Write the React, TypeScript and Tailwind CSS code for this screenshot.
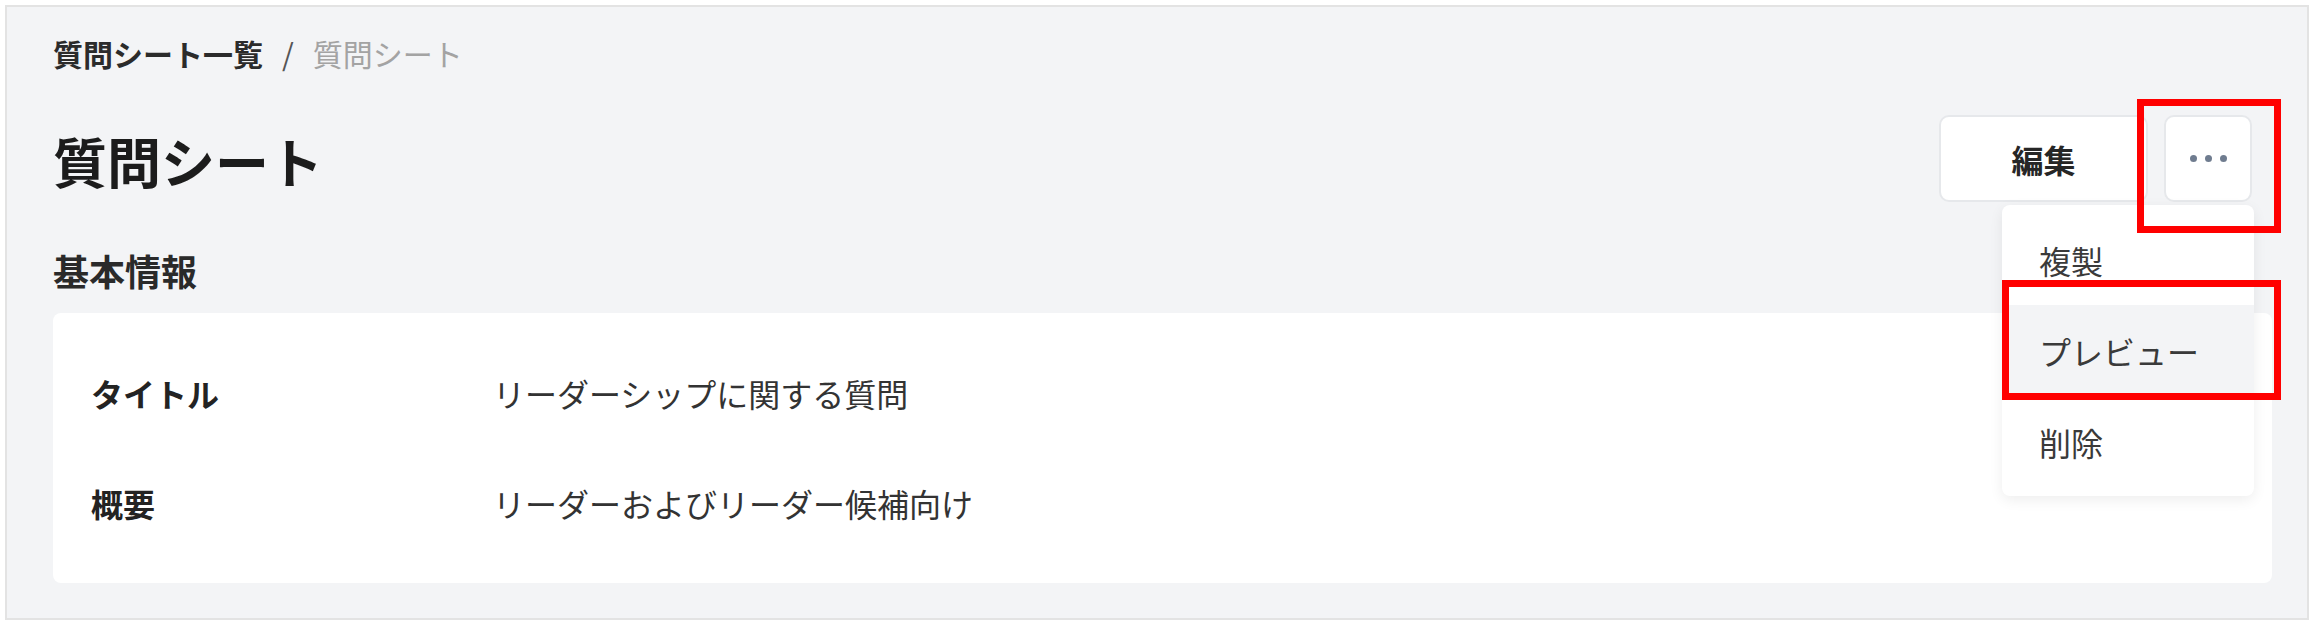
import { useState } from "react";

const menuItems = ["複製", "プレビュー", "削除"];

const rows = [
  { label: "タイトル", value: "リーダーシップに関する質問" },
  { label: "概要", value: "リーダーおよびリーダー候補向け" },
];

const MoreMenu = () => {
  const [hovered] = useState<number>(1);

  return (
    <div className="absolute right-[-2px] top-full mt-[3px] w-[252px] z-10 bg-white rounded-[8px] py-[9px] shadow-[0_4px_14px_rgba(0,0,0,0.07)]">
      {menuItems.map((item, i) => (
        <div
          key={item}
          className={`relative flex items-center h-[91px] pl-[37px] text-[32px] text-[#3a3a3a] ${
            i === hovered ? "bg-[#f3f4f6]" : ""
          }`}
        >
          {item}
          {/* annotation */}
          {i === hovered && (
            <span className="absolute left-0 -top-[25px] w-[279px] h-[120px] border-[7px] border-[#ff0000] z-20 pointer-events-none" />
          )}
        </div>
      ))}
    </div>
  );
};

export default function App() {
  return (
    <div className="bg-white min-h-screen p-[5px] font-['Noto_Sans_CJK_JP','Noto_Sans',sans-serif]">
      <div className="border-2 border-[#e3e3e3] bg-[#f3f4f6] pl-[46px] pr-[35px] pt-[24px] pb-[35px]">
        {/* Breadcrumb */}
        <div className="flex items-center text-[30px] leading-[45px]">
          <span className="font-bold text-[#2b2b2b]">質問シート一覧</span>
          <span className="mx-[19px] text-[#555]">/</span>
          <span className="text-[#a3a3a3]">質問シート</span>
        </div>

        {/* Header */}
        <div className="flex items-center justify-between mt-[39px] mr-[20px] h-[87px]">
          <h1 className="text-[54px] leading-[73px] font-bold text-[#1c1c1c] mt-[3px]">質問シート</h1>
          <div className="flex items-center gap-[16px]">
            <button className="w-[209px] h-[87px] bg-white border-2 border-[#e6e8eb] rounded-[10px] text-[32px] font-bold text-[#262626]">
              編集
            </button>
            <div className="relative">
              <button className="w-[88px] h-[87px] bg-white border-2 border-[#e6e8eb] rounded-[10px] flex items-center justify-center gap-[8px]">
                <span className="w-[7px] h-[7px] rounded-full bg-[#6f7c8f]" />
                <span className="w-[7px] h-[7px] rounded-full bg-[#6f7c8f]" />
                <span className="w-[7px] h-[7px] rounded-full bg-[#6f7c8f]" />
              </button>
              {/* annotation */}
              <span className="absolute -left-[27px] -top-[16px] w-[144px] h-[134px] border-[7px] border-[#ff0000] z-20 pointer-events-none" />
              <MoreMenu />
            </div>
          </div>
        </div>

        {/* Section */}
        <h2 className="mt-[41px] text-[36px] leading-[54px] font-bold text-[#2a2a2a]">基本情報</h2>

        <div className="mt-[16px] bg-white rounded-[8px] pl-[38px] py-[48px] flex flex-col gap-[46px]">
          {rows.map((row) => (
            <div key={row.label} className="grid grid-cols-[402px_1fr] items-center h-[64px] text-[32px]">
              <span className="font-bold text-[#232323]">{row.label}</span>
              <span className="text-[#333]">{row.value}</span>
            </div>
          ))}
        </div>
      </div>
    </div>
  );
}
